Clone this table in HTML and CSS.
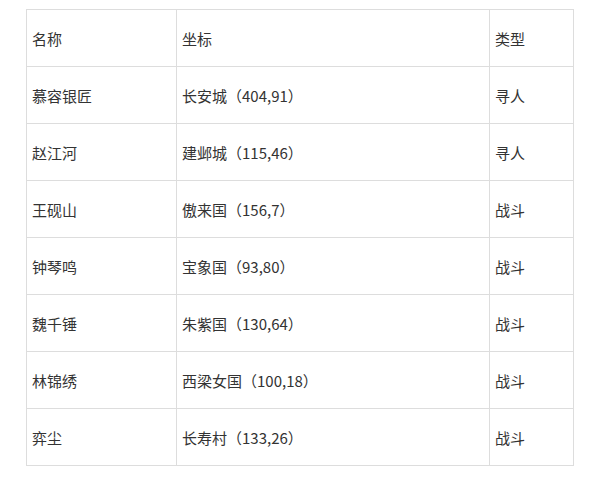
FILE: index.html
```html
<!DOCTYPE html>
<html lang="zh">
<head>
<meta charset="utf-8">
<link rel="stylesheet" href="styles.css">
</head>
<body>
<div class="wrap">
<table class="grid">
<colgroup><col class="c1"><col class="c2"><col class="c3"></colgroup>
<tr><td>名称</td><td>坐标</td><td>类型</td></tr>
<tr><td>慕容银匠</td><td>长安城（404,91）</td><td>寻人</td></tr>
<tr><td>赵江河</td><td>建邺城（115,46）</td><td>寻人</td></tr>
<tr><td>王砚山</td><td>傲来国（156,7）</td><td>战斗</td></tr>
<tr><td>钟琴鸣</td><td>宝象国（93,80）</td><td>战斗</td></tr>
<tr><td>魏千锤</td><td>朱紫国（130,64）</td><td>战斗</td></tr>
<tr><td>林锦绣</td><td>西梁女国（100,18）</td><td>战斗</td></tr>
<tr><td>弈尘</td><td>长寿村（133,26）</td><td>战斗</td></tr>
</table>
</div>
</body>
</html>
```

FILE: styles.css
```css
html, body { margin: 0; padding: 0; background: #fff; }
.wrap { padding: 9px 26px; }
.grid {
  border-collapse: collapse;
  table-layout: fixed;
  width: 547px;
  font-family: "Noto Sans CJK SC", "Noto Sans", sans-serif;
  font-size: 15px;
  color: #333;
}
.c1 { width: 150px; }
.c2 { width: 313px; }
.c3 { width: 84px; }
.grid td {
  border: 1px solid #ddd;
  height: 57px;
  padding: 0 5px;
  box-sizing: border-box;
  vertical-align: middle;
  white-space: nowrap;
}
```
